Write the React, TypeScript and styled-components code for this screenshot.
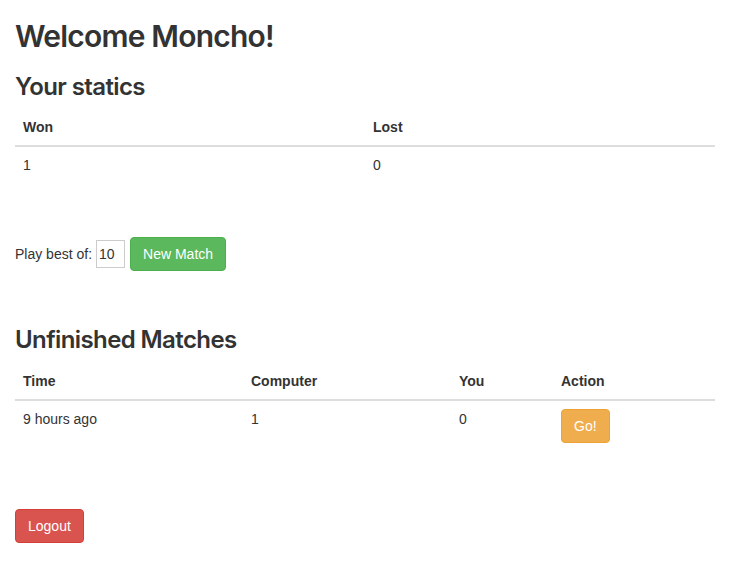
import React from 'react';
import styled, { createGlobalStyle } from 'styled-components';

const GlobalStyle = createGlobalStyle`
  html, body {
    margin: 0;
    padding: 0;
    background: #fff;
  }
  body {
    font-family: "Liberation Sans", Arial, Helvetica, sans-serif;
    font-size: 14px;
    line-height: 1.42857143;
    color: #333;
  }
`;

const Container = styled.div`
  width: 700px;
  padding: 0 15px;
  display: flow-root;
`;

const PageTitle = styled.h2`
  font-family: Inter, "Liberation Sans", Arial, sans-serif;
  font-size: 30px;
  font-weight: 600;
  letter-spacing: -0.8px;
  line-height: 1.1;
  margin: 20px 0 10px;
`;

const SectionTitle = styled.h3`
  font-family: Inter, "Liberation Sans", Arial, sans-serif;
  font-size: 24px;
  font-weight: 600;
  letter-spacing: -0.6px;
  line-height: 1.1;
  margin: 21px 0 9px;
`;

const Table = styled.table`
  width: 100%;
  border-collapse: collapse;
  border-spacing: 0;
  margin-bottom: 20px;
`;

const Th = styled.th<{ $width?: number }>`
  text-align: left;
  font-weight: bold;
  padding: 8px;
  line-height: 20px;
  vertical-align: bottom;
  border-bottom: 2px solid #ddd;
  width: ${p => (p.$width ? `${p.$width}px` : 'auto')};
  box-sizing: border-box;
`;

const Td = styled.td`
  padding: 8px;
  line-height: 20px;
  vertical-align: top;
  border-top: 1px solid #ddd;
`;

const FormRow = styled.form`
  display: flex;
  align-items: center;
  margin: 54px 0 56px;
`;

const Label = styled.label`
  margin-right: 4px;
`;

const NumberInput = styled.input`
  width: 29px;
  height: 28px;
  box-sizing: border-box;
  border: 1px solid #ccc;
  padding: 0 2px;
  margin: 0 5px 0 0;
  font-family: inherit;
  font-size: 14px;
  color: #333;
  outline: none;
`;

const variants = {
  success: { bg: '#5cb85c', border: '#4cae4c' },
  warning: { bg: '#f0ad4e', border: '#eea236' },
  danger: { bg: '#d9534f', border: '#d43f3a' },
};

const Button = styled.button<{ $variant: keyof typeof variants }>`
  display: inline-block;
  padding: 6px 12px;
  font-family: inherit;
  font-size: 14px;
  line-height: 20px;
  color: #fff;
  background: ${p => variants[p.$variant].bg};
  border: 1px solid ${p => variants[p.$variant].border};
  border-radius: 4px;
  cursor: pointer;
`;

const LogoutRow = styled.div`
  margin-top: 58px;
`;

const App: React.FC = () => {
  return (
    <>
      <GlobalStyle />
      <Container>
        <PageTitle>Welcome Moncho!</PageTitle>

        <SectionTitle>Your statics</SectionTitle>
        <Table>
          <thead>
            <tr>
              <Th $width={350}>Won</Th>
              <Th $width={350}>Lost</Th>
            </tr>
          </thead>
          <tbody>
            <tr>
              <Td>1</Td>
              <Td>0</Td>
            </tr>
          </tbody>
        </Table>

        <FormRow onSubmit={e => e.preventDefault()}>
          <Label>Play best of:</Label>
          <NumberInput type="text" defaultValue="10" />
          <Button $variant="success" type="submit">New Match</Button>
        </FormRow>

        <SectionTitle>Unfinished Matches</SectionTitle>
        <Table>
          <thead>
            <tr>
              <Th $width={228}>Time</Th>
              <Th $width={208}>Computer</Th>
              <Th $width={102}>You</Th>
              <Th>Action</Th>
            </tr>
          </thead>
          <tbody>
            <tr>
              <Td>9 hours ago</Td>
              <Td>1</Td>
              <Td>0</Td>
              <Td>
                <Button $variant="warning">Go!</Button>
              </Td>
            </tr>
          </tbody>
        </Table>

        <LogoutRow>
          <Button $variant="danger">Logout</Button>
        </LogoutRow>
      </Container>
    </>
  );
};

export default App;
